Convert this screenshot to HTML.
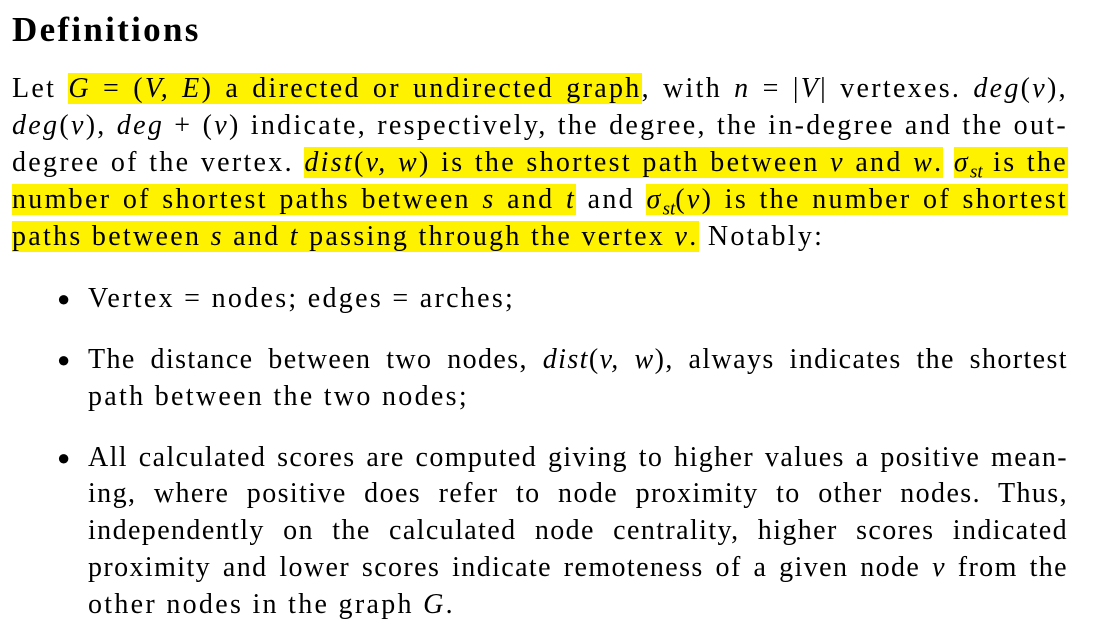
<!DOCTYPE html>
<html><head><meta charset="utf-8"><style>
body{margin:0;width:1113px;height:639px;background:#fff;overflow:hidden;font-family:"Liberation Serif",serif;color:#000;position:relative}
.t{position:absolute;left:12px;top:10px;font-size:35px;font-weight:bold;line-height:40px;letter-spacing:2.3px}
.l{position:absolute;font-size:28px;letter-spacing:2.3px;line-height:31px;height:31px;text-align:justify;text-align-last:justify;white-space:nowrap}
.p{left:12px;width:1056px}
.b{left:88px;width:980px;letter-spacing:1.4px}
.h{background:#fff200}
.bul{position:absolute;left:57px;font-size:22px;line-height:31px}
i{font-style:italic}
sub{font-size:19px;letter-spacing:0}
</style></head><body>
<div class="t">Definitions</div>
<div class="l p" style="top:73px;white-space:normal">Let <span class="h"><i>G</i> = (<i>V, E</i>) a directed or undirected graph</span>, with <i>n</i> = |<i>V</i>| vertexes. <i>deg</i>(<i>v</i>),</div>
<div class="l p" style="top:110px;white-space:normal"><i>deg</i>(<i>v</i>), <i>deg</i> + (<i>v</i>) indicate, respectively, the degree, the in-degree and the out-</div>
<div class="l p" style="top:147px;white-space:normal">degree of the vertex. <span class="h"><i>dist</i>(<i>v, w</i>) is the shortest path between <i>v</i> and <i>w</i>.</span> <span class="h"><i>σ<sub>st</sub></i> is the</span></div>
<div class="l p" style="top:184px;white-space:normal"><span class="h">number of shortest paths between <i>s</i> and <i>t</i></span> and <span class="h"><i>σ<sub>st</sub></i>(<i>v</i>) is the number of shortest</span></div>
<div class="l" style="top:221px;left:12px;white-space:nowrap;text-align:left"><span class="h">paths between <i>s</i> and <i>t</i> passing through the vertex <i>v</i>.</span> Notably:</div>

<div class="bul" style="top:283px">●</div>
<div class="l" style="top:283px;left:88px;text-align:left">Vertex = nodes; edges = arches;</div>

<div class="bul" style="top:344px">●</div>
<div class="l b" style="top:344px;white-space:normal">The distance between two nodes, <i>dist</i>(<i>v, w</i>), always indicates the shortest</div>
<div class="l" style="top:381px;left:88px;text-align:left">path between the two nodes;</div>

<div class="bul" style="top:442px">●</div>
<div class="l b" style="top:442px;white-space:normal">All calculated scores are computed giving to higher values a positive mean-</div>
<div class="l b" style="top:478px;white-space:normal">ing, where positive does refer to node proximity to other nodes. Thus,</div>
<div class="l b" style="top:515px;white-space:normal">independently on the calculated node centrality, higher scores indicated</div>
<div class="l b" style="top:552px;white-space:normal">proximity and lower scores indicate remoteness of a given node <i>v</i> from the</div>
<div class="l" style="top:589px;left:88px;text-align:left">other nodes in the graph <i>G</i>.</div>
</body></html>
